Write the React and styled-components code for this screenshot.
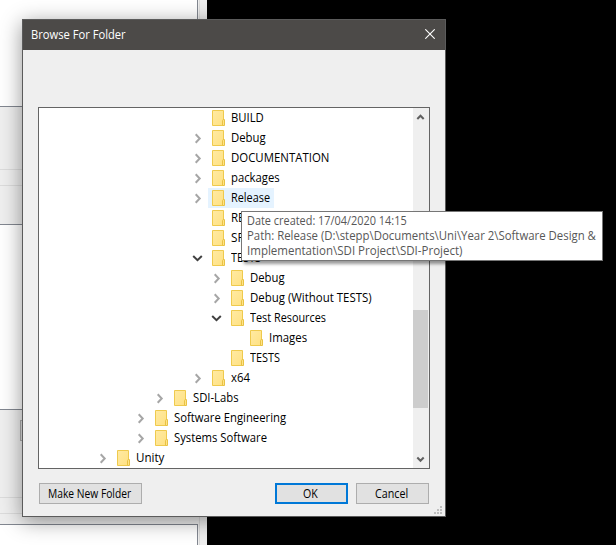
import React, { useLayoutEffect, useRef } from "react";
import styled, { createGlobalStyle, css } from "styled-components";

const GlobalStyle = createGlobalStyle`
  * { box-sizing: border-box; }
  html, body { margin: 0; background: #000; }
  body { font: 12px/20px "Open Sans", "Noto Sans", sans-serif; color: #000; overflow: hidden; }
  button { font: inherit; color: inherit; }
`;

const Desktop = styled.main`
  position: relative;
  width: 616px;
  height: 545px;
  overflow: hidden;
  background: #000;
`;

const BackWindow = styled.div`
  display: flex;
  width: 207px;
  height: 545px;
  background: #efefef;
`;

const BackColumn = styled.div`
  display: flex;
  flex-direction: column;
  width: 198px;
`;

const BackPane = styled.div`
  flex: none;
  height: ${(p) => p.$height}px;
  background: #fff;
  border: solid #828790;
  border-width: ${(p) => (p.$first ? "0 1px 1px 0" : p.$last ? "1px 1px 0 0" : "1px 1px 1px 0")};
`;

const BackGroup = styled.div`
  flex: none;
  display: flex;
  flex-direction: column;
  justify-content: flex-end;
  height: ${(p) => p.$height}px;
  padding-bottom: ${(p) => p.$bottom}px;
`;

const BackButton = styled.div`
  width: 60px;
  height: 21px;
  margin: 0 0 56px 20px;
  background: #e1e1e1;
  border: 1px solid #adadad;
`;

const BackStrip = styled.div`
  height: 17px;
  border: solid #dcdcdc;
  border-width: 1px 0;
`;

const BackEdge = styled.div`
  width: 2px;
  margin-left: 1px;
  border-left: 1px solid #dcdcdc;
`;

const Dialog = styled.section`
  position: absolute;
  left: 22px;
  top: 19px;
  display: flex;
  flex-direction: column;
  width: 424px;
  height: 498px;
  background: #efefef;
  border: 1px solid #5b5b5b;
  box-shadow: 0 4px 20px rgba(0, 0, 0, 0.42);
`;

const TitleBar = styled.header`
  display: flex;
  align-items: center;
  justify-content: space-between;
  height: 30px;
  padding: 0 10px 0 8px;
  background: #4c4a48;
  color: #fff;
`;

const CloseIcon = styled.svg`
  margin-bottom: 2px;
`;

const TreeFrame = styled.div`
  display: flex;
  width: 392px;
  height: 362px;
  margin: 57px 0 0 15px;
  background: #fff;
  border: 1px solid #646464;
`;

const Tree = styled.div`
  flex: 1;
  min-width: 0;
`;

const TreeRow = styled.div`
  display: flex;
  height: 20px;
  padding-left: ${(p) => 54 + p.$level * 19}px;
`;

const Expander = styled.span`
  display: flex;
  width: 20px;
  height: 20px;
`;

const TreeItem = styled.span`
  display: flex;
  gap: 6px;
  height: 20px;
  padding: 0 4px;
  ${(p) => p.$hover && css`background: #e5f3ff;`}
`;

const TextBox = styled.span`
  display: block;
  width: ${(p) => p.$width}px;
  text-align: left;
`;

const CondensedText = styled.span`
  display: inline-block;
  vertical-align: top;
  white-space: pre;
  transform-origin: 0 0;
`;

const ScrollBar = styled.div`
  display: flex;
  flex-direction: column;
  width: 16px;
  background: #efefef;
`;

const ScrollThumb = styled.div`
  width: 15px;
  height: 98px;
  margin: 185px 0 auto;
  background: #cdcdcd;
`;

const ButtonBar = styled.footer`
  display: flex;
  margin: 14px 0 0 16px;
`;

const DialogButton = styled.button`
  display: flex;
  justify-content: center;
  width: ${(p) => p.$width}px;
  height: 21px;
  padding: 0 2px 0 0;
  margin-left: ${(p) => p.$before || 0}px;
  line-height: ${(p) => (p.$primary ? 17 : 19)}px;
  background: #e1e1e1;
  border: ${(p) => (p.$primary ? "2px solid #0078d7" : "1px solid #adadad")};
`;

const Grip = styled.svg`
  position: absolute;
  right: 3px;
  bottom: 2px;
`;

const Tooltip = styled.div`
  position: absolute;
  left: 241px;
  top: 211px;
  width: 362px;
  height: 50px;
  padding: 1px 5px;
  line-height: 15px;
  color: #575757;
  background: #fff;
  border: 1px solid #767676;
  box-shadow: 3px 3px 3px rgba(0, 0, 0, 0.4);
`;

/* Condenses the text so that it fills the given pixel width. */
function Fit({ width, children }) {
  const ref = useRef(null);
  useLayoutEffect(() => {
    const el = ref.current;
    el.style.transform = `scaleX(${width / el.offsetWidth})`;
  }, [width, children]);
  return (
    <TextBox $width={width}>
      <CondensedText ref={ref}>{children}</CondensedText>
    </TextBox>
  );
}

const FolderIcon = () => (
  <svg width="13" height="20" viewBox="0 0 13 20">
    <defs>
      <linearGradient id="folder" x1="0" y1="0" x2="1" y2="1">
        <stop offset="0" stopColor="#ffeaa3" />
        <stop offset="1" stopColor="#ffe182" />
      </linearGradient>
    </defs>
    <path d="M.5 2.5h11v15H.5z" fill="url(#folder)" stroke="#efca4d" />
    <path d="M10.5 17.5v-5l.5-.9h1.5v5.9z" fill="#ffe487" stroke="#e9c245" />
  </svg>
);

const Chevron = ({ open }) => (
  <svg width="20" height="20" viewBox="0 0 20 20" fill="none" strokeWidth="2">
    {open ? (
      <path d="M5.2 8l4.3 4.1L13.8 8" stroke="#404040" />
    ) : (
      <path d="M7.7 6.3l4 4.2-4 4.2" stroke="#a6a6a6" />
    )}
  </svg>
);

const ScrollArrow = ({ down }) => (
  <svg width="16" height="17" viewBox="0 0 16 17" fill="none" stroke="#606060" strokeWidth="2">
    <path d={down ? "M4.3 6.5l3.2 3.3 3.2-3.3" : "M4.3 11l3.2-3.3 3.2 3.3"} />
  </svg>
);

const folders = [
  { name: "BUILD", level: 5, width: 33 },
  { name: "Debug", level: 5, width: 35, state: "closed" },
  { name: "DOCUMENTATION", level: 5, width: 98, state: "closed" },
  { name: "packages", level: 5, width: 49, state: "closed" },
  { name: "Release", level: 5, width: 39, state: "closed", hover: true },
  { name: "RESOURCES", level: 5, width: 64 },
  { name: "SPRITES", level: 5, width: 43 },
  { name: "TESTS", level: 5, width: 30, state: "open" },
  { name: "Debug", level: 6, width: 35, state: "closed" },
  { name: "Debug (Without TESTS)", level: 6, width: 122, state: "closed" },
  { name: "Test Resources", level: 6, width: 76, state: "open" },
  { name: "Images", level: 7, width: 38 },
  { name: "TESTS", level: 6, width: 30 },
  { name: "x64", level: 5, width: 19, state: "closed" },
  { name: "SDI-Labs", level: 3, width: 46, state: "closed" },
  { name: "Software Engineering", level: 2, width: 112, state: "closed" },
  { name: "Systems Software", level: 2, width: 93, state: "closed" },
  { name: "Unity", level: 0, width: 28, state: "closed" },
];

export default function App() {
  return (
    <>
      <GlobalStyle />
      <Desktop>
        <BackWindow>
          <BackColumn>
            <BackPane $height={107} $first />
            <BackGroup $height={117} $bottom={38}>
              <BackStrip />
            </BackGroup>
            <BackPane $height={186} />
            <BackGroup $height={114} $bottom={10}>
              <BackButton />
              <BackStrip />
            </BackGroup>
            <BackPane $height={21} $last />
          </BackColumn>
          <BackEdge />
        </BackWindow>

        <Dialog>
          <TitleBar>
            <Fit width={95}>Browse For Folder</Fit>
            <CloseIcon width="10" height="10" viewBox="0 0 10 10" stroke="#fff" strokeWidth="1.1">
              <path d="M.3 .3l9.4 9.4M9.7 .3L.3 9.7" />
            </CloseIcon>
          </TitleBar>
          <TreeFrame>
            <Tree>
              {folders.map((f, i) => (
                <TreeRow key={i} $level={f.level}>
                  <Expander>{f.state && <Chevron open={f.state === "open"} />}</Expander>
                  <TreeItem $hover={f.hover}>
                    <FolderIcon />
                    <Fit width={f.width}>{f.name}</Fit>
                  </TreeItem>
                </TreeRow>
              ))}
            </Tree>
            <ScrollBar>
              <ScrollArrow />
              <ScrollThumb />
              <ScrollArrow down />
            </ScrollBar>
          </TreeFrame>
          <ButtonBar>
            <DialogButton $width={103}>
              <Fit width={83}>Make New Folder</Fit>
            </DialogButton>
            <DialogButton $width={73} $before={133} $primary>
              <Fit width={15}>OK</Fit>
            </DialogButton>
            <DialogButton $width={73} $before={8}>
              <Fit width={33}>Cancel</Fit>
            </DialogButton>
          </ButtonBar>
          <Grip width="8" height="8" viewBox="0 0 8 8" fill="#bfbfbf">
            <path d="M6 0h2v2H6zM3 3h2v2H3zM6 3h2v2H6zM0 6h2v2H0zM3 6h2v2H3zM6 6h2v2H6z" />
          </Grip>
        </Dialog>

        <Tooltip>
          <Fit width={160}>Date created: 17/04/2020 14:15</Fit>
          <Fit width={349}>{"Path: Release (D:\\stepp\\Documents\\Uni\\Year 2\\Software Design &"}</Fit>
          <Fit width={215}>{"Implementation\\SDI Project\\SDI-Project)"}</Fit>
        </Tooltip>
      </Desktop>
    </>
  );
}
